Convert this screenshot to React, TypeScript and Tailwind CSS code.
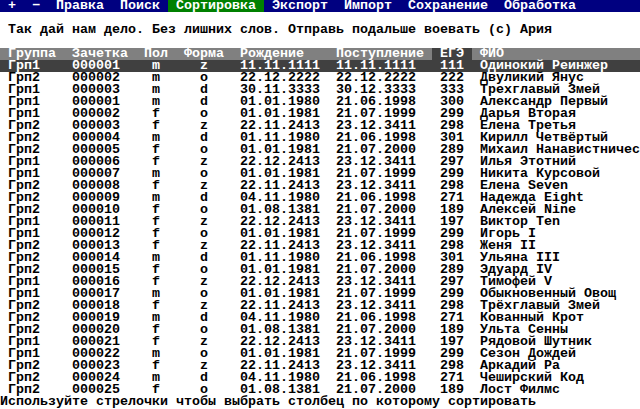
import React from "react";

type Row = [string, string, string, string, string, string, string, string];

const rows: Row[] = [
  ["Грп1", "000001", "m", "z", "11.11.1111", "11.11.1111", "111", "Одинокий Реинжер"],
  ["Грп2", "000002", "m", "o", "22.12.2222", "22.12.2222", "222", "Двуликий Янус"],
  ["Грп1", "000003", "m", "d", "30.11.3333", "30.12.3333", "333", "Трехглавый Змей"],
  ["Грп1", "000001", "m", "d", "01.01.1980", "21.06.1998", "300", "Александр Первый"],
  ["Грп1", "000002", "f", "o", "01.01.1981", "21.07.1999", "299", "Дарья Вторая"],
  ["Грп2", "000003", "f", "z", "22.11.2413", "23.12.3411", "298", "Елена Третья"],
  ["Грп2", "000004", "m", "d", "01.11.1980", "21.06.1998", "301", "Кирилл Четвёртый"],
  ["Грп2", "000005", "f", "o", "01.01.1981", "21.07.2000", "289", "Михаил Нанавистничес"],
  ["Грп1", "000006", "f", "z", "22.12.2413", "23.12.3411", "297", "Илья Этотний"],
  ["Грп1", "000007", "m", "o", "01.01.1981", "21.07.1999", "299", "Никита Курсовой"],
  ["Грп2", "000008", "f", "z", "22.11.2413", "23.12.3411", "298", "Елена Seven"],
  ["Грп2", "000009", "m", "d", "04.11.1980", "21.06.1998", "271", "Надежда Eight"],
  ["Грп2", "000010", "f", "o", "01.08.1381", "21.07.2000", "189", "Алексей Nine"],
  ["Грп1", "000011", "f", "z", "22.12.2413", "23.12.3411", "197", "Виктор Ten"],
  ["Грп1", "000012", "f", "o", "01.01.1981", "21.07.1999", "299", "Игорь I"],
  ["Грп2", "000013", "f", "z", "22.11.2413", "23.12.3411", "298", "Женя II"],
  ["Грп2", "000014", "m", "d", "01.11.1980", "21.06.1998", "301", "Ульяна III"],
  ["Грп2", "000015", "f", "o", "01.01.1981", "21.07.2000", "289", "Эдуард IV"],
  ["Грп1", "000016", "f", "z", "22.12.2413", "23.12.3411", "297", "Тимофей V"],
  ["Грп1", "000017", "m", "o", "01.01.1981", "21.07.1999", "299", "Обыкновенный Овощ"],
  ["Грп2", "000018", "f", "z", "22.11.2413", "23.12.3411", "298", "Трёхглавый Змей"],
  ["Грп2", "000019", "m", "d", "04.11.1980", "21.06.1998", "271", "Кованный Крот"],
  ["Грп2", "000020", "f", "o", "01.08.1381", "21.07.2000", "189", "Ульта Сенны"],
  ["Грп1", "000021", "f", "z", "22.12.2413", "23.12.3411", "197", "Рядовой Шутник"],
  ["Грп1", "000022", "m", "o", "01.01.1981", "21.07.1999", "299", "Сезон Дождей"],
  ["Грп2", "000023", "f", "z", "22.11.2413", "23.12.3411", "298", "Аркадий Ра"],
  ["Грп2", "000024", "m", "d", "04.11.1980", "21.06.1998", "271", "Чеширский Код"],
  ["Грп2", "000025", "f", "o", "01.08.1381", "21.07.2000", "189", "Лост Филмс"],
];

function DataRow({ row, selected }: { row: Row; selected?: boolean }) {
  const [group, id, sex, form, born, enrolled, score, name] = row;
  return (
    <div
      className={`flex h-[12px] whitespace-pre ${
        selected ? "bg-[#404040] text-white" : "text-black"
      }`}
    >
      <div className="w-[8px]" />
      <div className="w-[64px]">{group}</div>
      <div className="w-[72px]">{id}</div>
      <div className="w-[40px] pl-[8px]">{sex}</div>
      <div className="w-[56px] pl-[16px]">{form}</div>
      <div className="w-[96px]">{born}</div>
      <div className="w-[96px]">{enrolled}</div>
      <div className="w-[40px] pl-[8px]">{score}</div>
      <div className="flex-1 pl-[8px]">{name}</div>
    </div>
  );
}

export default function App() {
  return (
    <div className="h-[409px] w-[640px] overflow-hidden bg-white font-['Liberation_Mono',monospace] text-[13.333px] leading-[12px] font-bold">
      {/* Menu bar */}
      <div className="flex h-[12px] whitespace-pre bg-[#000080] text-white">
        <span> +  −  Правка  Поиск </span>
        <span className="bg-[#008000]"> Сортировка </span>
        <span> Экспорт  Импорт  Сохранение  Обработка</span>
      </div>

      <div className="h-[12px]" />
      <div className="h-[12px] whitespace-pre text-black">
        {" Так дай нам дело. Без лишних слов. Отправь подальше воевать (с) Ария"}
      </div>
      <div className="h-[12px]" />

      {/* Column headers */}
      <div className="flex h-[12px] whitespace-pre bg-[#808080] text-white">
        <div className="w-[8px]" />
        <div className="w-[64px]">Группа</div>
        <div className="w-[72px]">Зачетка</div>
        <div className="w-[40px]">Пол</div>
        <div className="w-[56px]">Форма</div>
        <div className="w-[96px]">Рождение</div>
        <div className="w-[96px]">Поступление</div>
        <div className="w-[40px] bg-[#404040] pl-[8px]">ЕГЭ</div>
        <div className="flex-1 pl-[8px]">ФИО</div>
      </div>

      {rows.map((row, i) => (
        <DataRow key={i} row={row} selected={i === 0} />
      ))}

      <div className="h-[12px] whitespace-pre text-black">
        Используйте стрелочки чтобы выбрать столбец по которому сортировать
      </div>
    </div>
  );
}
